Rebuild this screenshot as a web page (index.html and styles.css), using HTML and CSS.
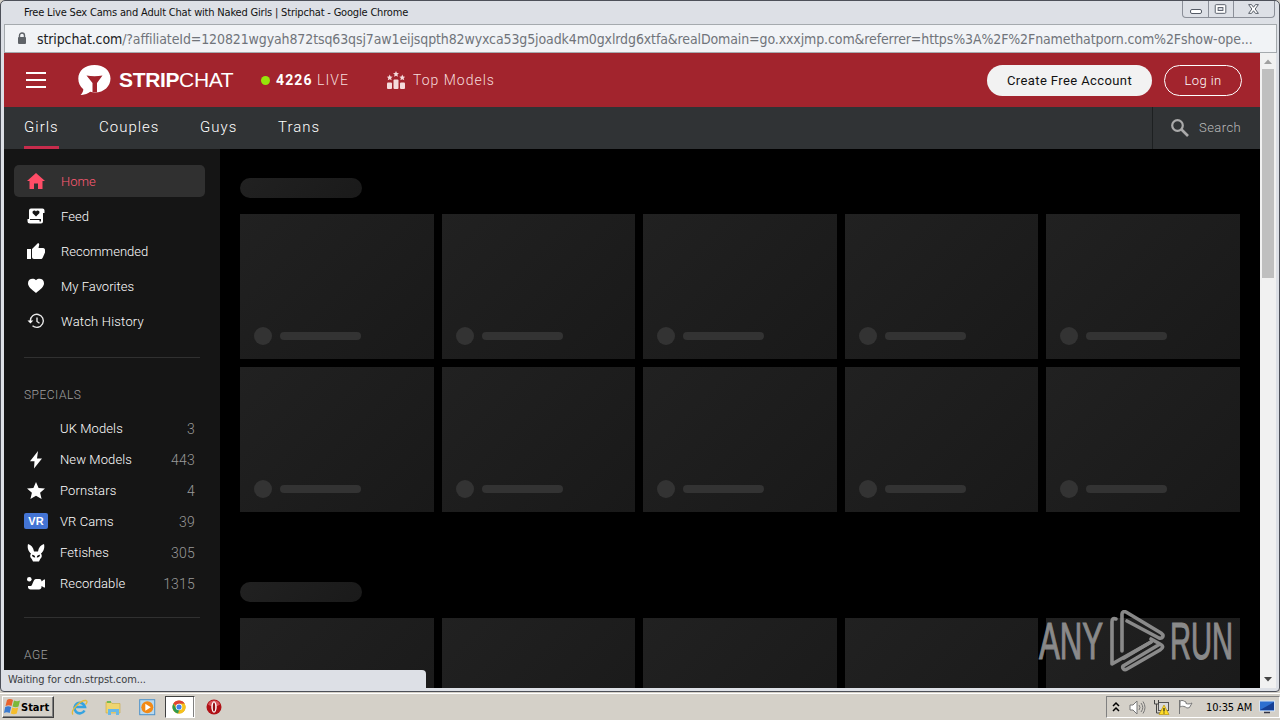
FILE: index.html
```html
<!DOCTYPE html>
<html lang="en">
<head>
<meta charset="utf-8">
<title>Stripchat</title>
<link rel="stylesheet" href="styles.css">
</head>
<body>
<div class="window">
  <div class="titlebar">
    <span class="title">Free Live Sex Cams and Adult Chat with Naked Girls | Stripchat - Google Chrome</span>
    <div class="winbtns">
      <svg width="25" height="18" viewBox="0 0 25 18"><rect x="7.500" y="9.500" width="11" height="4" rx="1.500" fill="#fff" stroke="#555b66"/></svg>
      <svg width="25" height="18" viewBox="0 0 25 18"><rect x="6.500" y="4.500" width="11" height="9" rx="1" fill="#fff" stroke="#555b66"/><rect x="9.500" y="7.500" width="5" height="3" fill="#dde0e6" stroke="#555b66"/></svg>
      <svg width="41" height="18" viewBox="0 0 41 18"><path d="M15 4.500h3l2 2.700 2-2.700h3l-3.300 4.500 3.300 4.500h-3l-2-2.700-2 2.700h-3l3.300-4.500z" fill="#fff" stroke="#555b66"/></svg>
    </div>
  </div>
  <div class="address">
    <svg class="lock" width="10" height="13" viewBox="0 0 10 13"><path d="M2.500 6V3.500a2.500 2.500 0 0 1 5 0V6" fill="none" stroke="#5f6368" stroke-width="1.400"/><rect x="1" y="5" width="8" height="7" rx="1" fill="#5f6368"/></svg>
    <span class="url"><b>stripchat.com</b>/?affiliateId=120821wgyah872tsq63qsj7aw1eijsqpth82wyxca53g5joadk4m0gxlrdg6xtfa&amp;realDomain=go.xxxjmp.com&amp;referrer=https%3A%2F%2Fnamethatporn.com%2Fshow-ope...</span>
  </div>
  <div class="view">
    <div class="page">
      <header class="top">
        <svg class="burger" width="20" height="16" viewBox="0 0 20 16"><path d="M0 1h20M0 8h20M0 15h20" stroke="#fff" stroke-width="2"/></svg>
        <svg class="logo" width="33" height="31" viewBox="0 0 33 31"><path d="M16.500 0C26 0 32.500 5.800 32.500 13.500S26 27.500 17 27.500c-1.800 0-3.200-.2-4.800-.7C9.500 29 6 30.200 2.500 29.800c1.800-1.500 2.700-3.300 2.800-5.600C2 21.500.3 18 .3 13.500.3 5.800 7 0 16.500 0z" fill="#fff"/><path d="M8.500 10.500c5 1 11 1 16 0l-5.500 7.500v9.300h-4.500V18z" fill="#a2242d"/></svg>
        <span class="brand"><b>STRIP</b>CHAT</span>
        <i class="dot"></i>
        <span class="live"><b>4226</b> LIVE</span>
        <svg class="podium" width="18" height="18" viewBox="0 0 18 18" fill="#f5dcdc"><rect x="0" y="11.500" width="5" height="6.500" rx="1"/><rect x="6.500" y="8.500" width="5" height="9.500" rx="1"/><rect x="13" y="11.500" width="5" height="6.500" rx="1"/><path id="s" d="M9 0l.9 2 2.100.2-1.600 1.400.5 2.200L9 4.700 7.100 5.800l.5-2.200L6 2.200 8.100 2z"/><use href="#s" x="-6.300" y="3.500"/><use href="#s" x="6.300" y="3.500"/></svg>
        <span class="topm">Top Models</span>
        <span class="btn create"><span>Create Free Account</span></span>
        <span class="btn login"><span>Log in</span></span>
      </header>
      <nav class="tabs">
        <span class="tab t1">Girls</span><span class="tab t2">Couples</span><span class="tab t3">Guys</span><span class="tab t4">Trans</span>
        <div class="search"><svg width="18" height="18" viewBox="0 0 18 18"><circle cx="6.500" cy="6.500" r="5.300" fill="none" stroke="#aaa" stroke-width="2.200"/><path d="M10.500 10.500l6.500 6.500" stroke="#aaa" stroke-width="2.600"/></svg><span>Search</span></div>
      </nav>
      <div class="body">
        <aside class="side">
          <ul class="main">
            <li class="on"><svg viewBox="0 0 18 18"><path d="M9 1l9 8h-2.500v8H11v-5.500H7V17H2.500V9H0z" fill="#ff4d67"/></svg><span>Home</span></li>
            <li><svg viewBox="0 0 18 18"><path fill-rule="evenodd" d="M4 1.500h11.500a2 2 0 0 1 2 2V6H16v8.500a2 2 0 0 1-2 2H3a2.500 2.500 0 0 1-2.500-2.500v-2H2V3.500a2 2 0 0 1 2-2zM3 12v1h9.500v1.500H14V12zM9 9.500l3.300-3.200A1.800 1.800 0 0 0 9 4.500a1.800 1.800 0 0 0-3.300 1.800z"/></svg><span>Feed</span></li>
            <li><svg viewBox="0 0 18 18"><path d="M0 7h4v10H0zM5 7l5.500-5.500c1-.6 1.900.3 1.700 1.300L11.500 6H16c1.500 0 2 1 2 2v2.500l-2.300 5.300c-.4.800-1 1.200-2 1.200H7c-1.200 0-2-.8-2-2z"/></svg><span>Recommended</span></li>
            <li><svg viewBox="0 0 18 18"><path d="M9 16C4 12 1 9.500 1 6.200 1 1.500 6.500.8 9 3.200c2.500-2.400 8-1.700 8 3C17 9.500 14 12 9 16z"/></svg><span>My Favorites</span></li>
            <li><svg viewBox="0 0 18 18"><path d="M3.300 9A6.500 6.500 0 1 1 5.500 13.700M10 5.500v4l2.500 1.800" fill="none" stroke="#e8e8e8" stroke-width="1.400"/><path d="M.5 8.500h5.800L3.400 11.500z"/></svg><span class="n5">Watch History</span></li>
          </ul>
          <hr>
          <h4>SPECIALS</h4>
          <ul class="spec">
            <li><i class="gap"></i><span>UK Models</span><em>3</em></li>
            <li><svg viewBox="0 0 18 18"><path d="M11 0L3 10.300h4.500L7 17.500 15 7.500h-5z"/></svg><span>New Models</span><em>443</em></li>
            <li><svg viewBox="0 0 18 18"><path d="M9 0l2.600 6 6.400.6-4.900 4.200L14.600 17 9 13.700 3.400 17l1.500-6.200L0 6.600 6.400 6z"/></svg><span>Pornstars</span><em>4</em></li>
            <li><i class="vr">VR</i><span>VR Cams</span><em>39</em></li>
            <li><svg viewBox="0 0 18 18"><path fill-rule="evenodd" d="M1 0c3 .8 5.500 3.500 6 7.500h4c.5-4 3-6.700 6-7.500 1 4-.5 7.500-3 9.500 1.300 2 1 4-.8 5.500L12 17.500H6L4.800 15C3 13.500 2.700 11.500 4 9.500 1.500 7.500 0 4 1 0zM5 10.800c0 1.800 1.300 2.700 3.200 2.600 0-1.700-1.200-2.600-3.200-2.600zm8 0c-2 0-3.200.9-3.200 2.600 1.900.1 3.200-.8 3.200-2.600z"/></svg><span>Fetishes</span><em>305</em></li>
            <li><svg viewBox="0 0 18 18"><circle cx="2.300" cy="4.300" r="2.300"/><path d="M9 4h3.500a2 2 0 0 1 2 2v.5L17 4.500h1v8h-1l-2.500-1.500V12c0 1.500-1 2.500-2.500 2.500H3.500c-1.500 0-2.500-1-2.500-2.500v-1h3C6 10 6 4 9 4z"/></svg><span>Recordable</span><em>1315</em></li>
          </ul>
          <hr class="second">
          <h4>AGE</h4>
        </aside>
        <main>
          <div class="pill"></div>
          <div class="grid">
            <div class="card"><i></i><b></b></div><div class="card"><i></i><b></b></div><div class="card"><i></i><b></b></div><div class="card"><i></i><b></b></div><div class="card"><i></i><b></b></div>
            <div class="card"><i></i><b></b></div><div class="card"><i></i><b></b></div><div class="card"><i></i><b></b></div><div class="card"><i></i><b></b></div><div class="card"><i></i><b></b></div>
          </div>
          <div class="pill next"></div>
          <div class="grid">
            <div class="card"></div><div class="card"></div><div class="card"></div><div class="card"></div><div class="card"></div>
          </div>
        </main>
      </div>
    </div>
    <div class="scroll">
      <svg width="16" height="16" viewBox="0 0 16 16"><path d="M4 11h8l-4-4.500z" fill="#a0a0a0"/></svg>
      <div class="thumb"></div>
      <svg width="16" height="17" viewBox="0 0 16 17"><path d="M4 6h8l-4 4.500z" fill="#444"/></svg>
    </div>
  </div>
  <div class="status"><span>Waiting for cdn.strpst.com...</span></div>
  <div class="mark">
    <span class="any">ANY</span>
    <svg width="56" height="62" viewBox="0 0 56 62" fill="none" stroke="#969696" stroke-width="3.600" stroke-linejoin="round" stroke-linecap="round"><path d="M6 9C3 8 2 9 2 12V54L41 32"/><path d="M12 41V4c0-2 2-3 4-2L51 23c4 3 1 6-2 5L17 11"/><path d="M41 32l-27 16M50 34c4 2 3 4 0 6L17 59c-3 2-5-1-4-3l37-22-9-5"/></svg>
    <span class="run">RUN</span>
  </div>
</div>
<div class="taskbar">
  <div class="start"><svg width="17" height="16" viewBox="0 0 17 16"><path d="M3 1c2-1.500 4-1.200 6 0L7.500 7C5.500 6 4 6 1.500 7z" fill="#e8622c"/><path d="M10 1.500c2 1 4 1 6 0L14.500 7.500c-2 1-4 .8-6 0z" fill="#7bb83a"/><path d="M1.200 8c2-1 4-1 6 0l-1.500 6c-2-1-4-1-5.700 0z" fill="#3b7bd0"/><path d="M8.200 8.500c2 1 4 1 6 0L12.800 14.500c-2 1-4 1-6 0z" fill="#f5bd2c"/></svg><b>Start</b></div>
  <svg class="ie" width="17" height="17" viewBox="0 0 17 17"><path d="M13.500 11.500A5.300 5.300 0 1 1 14 8H5" fill="none" stroke="#35a3e0" stroke-width="2.600"/><path d="M2 15.500C-1 12 9 1 15 1.500c2 1 .5 3-.5 4" fill="none" stroke="#e5bb38" stroke-width="1.300"/></svg>
  <svg class="exp" width="17" height="17" viewBox="0 0 17 17"><path d="M1 3h5l1 1.500h8V14H1z" fill="#efd56f" stroke="#c9a93f" stroke-width=".6"/><path d="M2 2h4v2H2z" fill="#72b956"/><path d="M3 16v-6h11v6h-3v-3H6v3z" fill="#69b9e7"/></svg>
  <svg class="wmp" width="17" height="17" viewBox="0 0 17 17"><rect x=".7" y=".7" width="15" height="15" fill="#b9d9ee" stroke="#4c91c9"/><circle cx="8.300" cy="8.300" r="6" fill="#f28a16"/><path d="M6.300 4.800l5.500 3.500-5.500 3.500z" fill="#fff"/></svg>
  <div class="active"><svg width="14" height="14" viewBox="0 0 16 16"><circle cx="8" cy="8" r="7.500" fill="#e0a91b"/><path d="M8 8L1.500 4.200A7.500 7.500 0 0 1 14.500 4.200H8z" fill="#dd4336"/><path d="M1.500 4.200L5 10l3 1.500L7 15.400A7.500 7.500 0 0 1 1.500 4.200z" fill="#2f9b50"/><path d="M8 4.200h6.500a7.500 7.500 0 0 1-7.500 11.200L11 10z" fill="#f6c21c"/><circle cx="8" cy="8" r="3.700" fill="#fff"/><circle cx="8" cy="8" r="2.900" fill="#3f80e8"/></svg></div>
  <svg class="opera" width="16" height="16" viewBox="0 0 16 16"><circle cx="8" cy="8" r="7.500" fill="#b01116"/><path d="M2 5.500a6.500 6.500 0 0 1 12 0C11 8 5 8 2 5.500z" fill="#d9545a"/><ellipse cx="8" cy="8" rx="2.700" ry="5.700" fill="#fff"/><ellipse cx="8" cy="8" rx="1.200" ry="4.600" fill="#951015"/></svg>
  <div class="tray">
    <svg width="8" height="12" viewBox="0 0 8 12"><path d="M1 5l3-3 3 3M1 10l3-3 3 3" fill="none" stroke="#000" stroke-width="1.500"/></svg>
    <svg class="vol" width="17" height="15" viewBox="0 0 17 15" fill="none" stroke="#777"><path d="M1 5h3l4-4v13l-4-4H1z" fill="#fff"/><path d="M10 5q2 2.500 0 5M12 3q3.500 4.500 0 9M14 1.500q4 6 0 12"/></svg>
    <svg class="net" width="17" height="16" viewBox="0 0 17 16"><rect x="5.500" y="3.500" width="10" height="8" fill="#d9d9d9" stroke="#555"/><path d="M1.500 1v4h4V1M3.500 5v9h5" fill="none" stroke="#444"/><path d="M11 6l5 9.500H6z" fill="#ffdc25" stroke="#b8930c" stroke-width=".7"/><path d="M11 9v3.500M11 13.500v1" stroke="#222" stroke-width="1.200"/></svg>
    <svg class="flag" width="16" height="16" viewBox="0 0 16 16"><path d="M1.500 1v14M2 2c3-1.500 4 .5 6 1v1.500c2 .8 4 .5 6-.5l-2.500 4.500c-2 .8-3 .5-4-.5C5 7 4 7 2 8z" fill="#fff" stroke="#777"/></svg>
    <span class="clock">10:35 AM</span>
    <svg class="desk" width="16" height="14" viewBox="0 0 16 14"><rect x=".5" y="1" width="15" height="10" fill="#2e6fd0" stroke="#d8e4f2"/><path d="M1 10L15 2v8z" fill="#173f94"/><path d="M5 12.500h6" stroke="#334" stroke-width="1.500"/></svg>
  </div>
</div>
</body>
</html>
```
FILE: styles.css
```css
*{box-sizing:border-box}
body{margin:0;width:1280px;height:720px;overflow:hidden;background:#d4d0c8;font-family:Roboto,"Liberation Sans",Arial,sans-serif;display:flex;flex-direction:column}
svg{display:block;flex:none}
span{white-space:nowrap}
.window{position:relative;height:692px;flex:none;background:#dde0e6;border:1px solid #4d5059;border-radius:5px 5px 4px 4px;padding:0 3px 3px;display:flex;flex-direction:column;overflow:hidden}
.titlebar{height:23px;flex:none;display:flex;justify-content:space-between;padding-left:20px}
.title{font:11px/23px "DejaVu Sans Condensed","DejaVu Sans",sans-serif;font-stretch:condensed;letter-spacing:-.185px;color:#111}
.winbtns{display:flex;height:17px;margin-right:1px;border:1px solid #8b8f98;border-top:0;border-radius:0 0 4px 4px;overflow:hidden}
.winbtns svg{margin-top:-1px}
.winbtns svg+svg{border-left:1px solid #8b8f98}
.address{height:29px;flex:none;background:#f1f3f6;border:1px solid #a5aaae;display:flex;align-items:center;padding-left:12px;margin-right:-1px}
.url{margin-left:10px;font:14px/26px "DejaVu Sans Condensed","DejaVu Sans",sans-serif;font-stretch:condensed;letter-spacing:-.115px;color:#70747a}
.url b{font-weight:400;color:#202124}
.view{display:flex;height:635px;flex:none}
.page{width:1256px;height:635px;background:#000;overflow:hidden}
.top{height:54px;background:#a2242d;display:flex;align-items:center;padding-left:22px;color:#fff}
.logo{margin-left:32px}
.brand{font-family:"Liberation Sans",Arial,sans-serif;font-size:21px;letter-spacing:-.35px;margin-left:8px;width:115px}
.dot{width:9px;height:9px;border-radius:50%;background:#96e50a;margin-left:27px}
.live{font-size:14px;margin-left:6px;width:75px;letter-spacing:1.1px;color:#f5dcdc}
.brand b,.live b{font-weight:700;color:#fff}
.podium{margin-left:36px}
.topm{font-size:14px;margin-left:8px;letter-spacing:1px;color:#f5dcdc}
.btn{height:31px;border-radius:16px;display:flex;align-items:center;justify-content:center;font-size:13px}
.create{width:165px;background:#f2f2f2;color:#111;margin-left:auto;letter-spacing:.4px;font-weight:400}
.login{width:78px;border:1px solid #fff;margin:0 18px 0 12px;letter-spacing:.4px}
.tabs{height:42px;background:#303335;display:flex;padding-left:20px;color:#fff;font-size:15px;letter-spacing:1px;line-height:40px}
.tab{height:42px}
.t1{width:35px;border-bottom:3px solid #c72c4c}
.t2{margin-left:40px;width:61px}.t3{margin-left:40px;width:38px}.t4{margin-left:40px}
.search{margin-left:auto;width:108px;border-left:1px solid #1d2021;display:flex;align-items:center;padding-left:18px;color:#bbb;font-size:13px;letter-spacing:.45px}
.search span{margin-left:10px}
.top,.tabs,.side{font-weight:300}
.body{display:flex;height:540px}
.side{width:216px;background:#151515;padding:15px 0 0;flex:none}
ul{list-style:none;margin:0;padding:0}
.main{display:flex;flex-direction:column;gap:3px;padding:1px 15px 0 10px}
.main li{height:32px;display:flex;align-items:center;padding-left:13px;border-radius:5px;color:#fff;font-size:13px;letter-spacing:.02px}
.main .n5{letter-spacing:.2px}
.side svg{width:18px;height:18px;fill:#fff}
.main span{margin-left:16px}
.main .on{background:#303030;color:#ff5a73}
hr{border:0;border-top:1px solid #303030;width:176px;margin:20px 0 0 20px}
h4{font-weight:300;font-size:12px;line-height:14px;letter-spacing:.5px;color:#a0a0a0;margin:30px 0 0 20px}
.spec{margin-top:11px;padding-left:20px;width:191px}
.spec li{height:31px;display:flex;align-items:center;font-size:13px;letter-spacing:.1px;color:#fff}
.spec svg{margin:0 3px}
.spec span{margin-left:12px}
.gap{width:24px}
.vr{width:24px;height:16px;border-radius:2px;background:#4374d4;font:bold 11px/16px "Liberation Sans",sans-serif;text-align:center;margin-top:-1px}
em{font-style:normal;margin-left:auto;color:#999;font-size:14px;letter-spacing:.2px}
.second{margin-top:18px}
main{flex:1;padding:29px 20px 0}
.pill{width:122px;height:20px;border-radius:10px;background:linear-gradient(135deg,#212121,#1a1a1a)}
.grid{margin-top:16px;display:grid;grid-template-columns:repeat(5,1fr);gap:8px}
.card{height:145px;background:linear-gradient(135deg,#212121,#191919);display:flex;align-items:flex-end;padding:0 0 14px 14px}
.card i{width:18px;height:18px;border-radius:50%;background:#333}
.card b{width:81px;height:8px;border-radius:4px;background:#333;margin:0 0 5px 8px}
.next{margin-top:70px}
.scroll{width:16px;background:#f1f1f1;display:flex;flex-direction:column}
.thumb{height:209px;width:12px;margin:0 2px auto;background:#bfbfbf}
.status{position:absolute;left:3px;bottom:2px;width:422px;height:19px;background:#dde0e6;border-radius:0 4px 0 0;font:11px/19px "DejaVu Sans Condensed","DejaVu Sans",sans-serif;font-stretch:condensed;letter-spacing:-.08px;color:#3a3d42;padding-left:4px}
.mark{position:absolute;left:1038px;top:609px;display:flex;height:62px;align-items:center;color:#969696;opacity:.9;font:52px/62px "Liberation Sans",Arial,sans-serif;-webkit-text-stroke:1.2px #969696}
.mark span{display:block;transform:scaleX(.6);transform-origin:0 50%}
.mark .any{width:63px}
.mark svg{margin-left:8px}
.mark .run{margin-left:4px;transform:scaleX(.56)}
.taskbar{height:28px;background:#d4d0c8;border-top:1px solid #d4d0c8;box-shadow:inset 0 1px #fff;display:flex;align-items:center;padding:1px 0 0 2px}
.start{width:52px;height:22px;border:1px solid;border-color:#fff #404040 #404040 #fff;box-shadow:inset -1px -1px #808080;display:flex;align-items:center;font:bold 11px "DejaVu Sans Condensed","DejaVu Sans",sans-serif;font-stretch:condensed;padding-left:1px}
.ie{margin-left:17px}.exp{margin-left:17px}.wmp{margin-left:17px}
.active{width:30px;height:22px;margin-left:9px;background:#fff;border:1px solid;border-color:#404040 #fff #fff #404040;box-shadow:inset -1px 0 #808080;display:flex;align-items:center;padding-left:6px}
.opera{margin-left:11px}
.tray{margin-left:auto;width:174px;height:22px;border:1px solid;border-color:#808080 #fff #fff #808080;display:flex;align-items:center;padding-left:5px}
.vol{margin-left:9px}.net{margin-left:7px}.flag{margin-left:8px}
.clock{font:11px "DejaVu Sans Condensed","DejaVu Sans",sans-serif;font-stretch:condensed;margin-left:12px;width:46px;letter-spacing:-.1px}
.desk{margin-left:7px}
```
